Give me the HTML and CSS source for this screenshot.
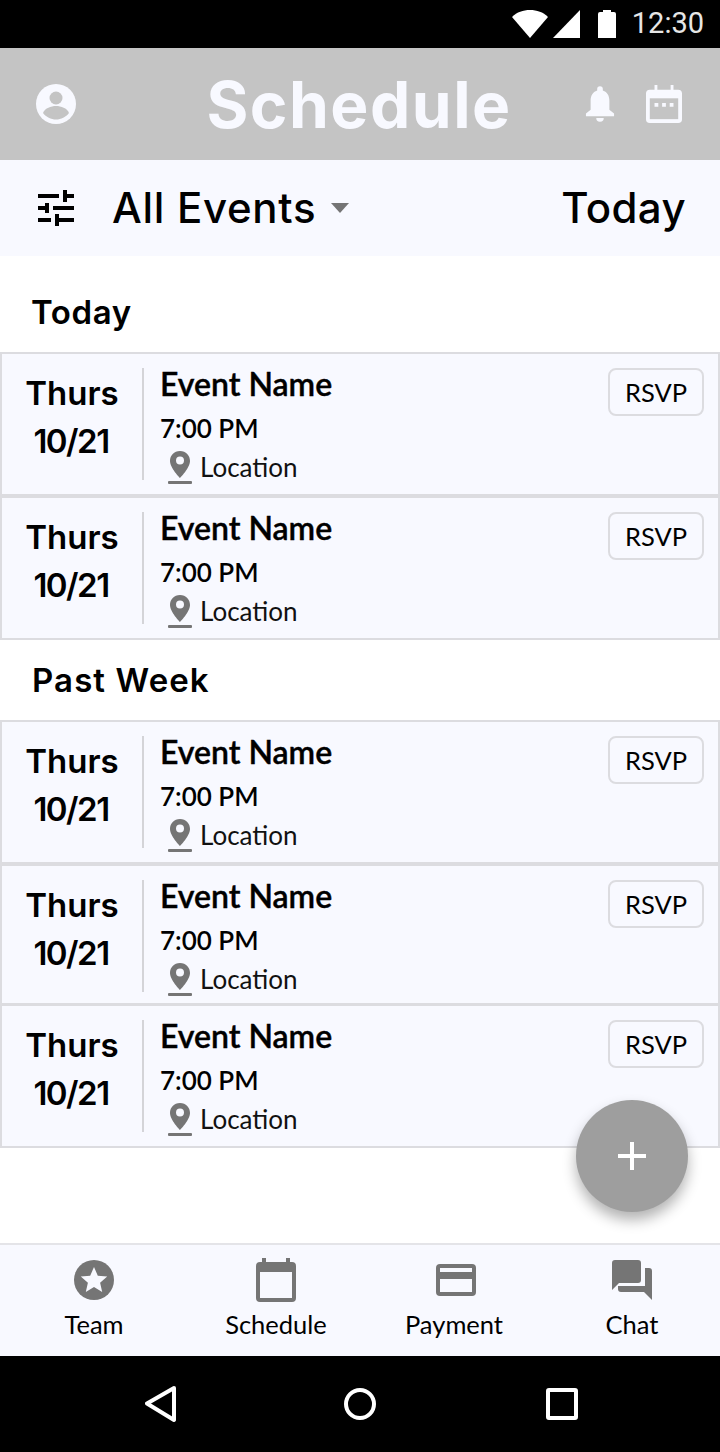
FILE: index.html
```html
<!DOCTYPE html>
<html lang="en">
<head>
  <meta charset="UTF-8" />
  <meta name="viewport" content="width=device-width, initial-scale=1.0"/>
  <title>Schedule</title>
  <link rel="stylesheet" href="styles.css">
</head>
<body>
  <div class="statusbar">
    <svg class="st-wifi" width="36" height="28" viewBox="0 0 36 28"><path d="M0 7C5 2 11 0 18 0s13 2 18 7L18 28z" fill="#fff"/></svg>
    <svg class="st-signal" width="27" height="28" viewBox="0 0 27 28"><path d="M27 0v28H0z" fill="#fff"/></svg>
    <svg class="st-batt" width="18" height="28" viewBox="0 0 18 28"><path d="M5 2V0h8v2h3a2 2 0 0 1 2 2v24H0V4a2 2 0 0 1 2-2z" fill="#fff"/></svg>
    <span class="st-time">12:30</span>
  </div>

  <header class="topbar">
    <svg class="top-user" width="40" height="40" viewBox="0 0 40 40"><circle cx="20" cy="20" r="20" fill="#f8f9ff"/><circle cx="20" cy="14" r="6.500" fill="#c4c4c4"/><path d="M7 29c2-5 8-7 13-7s11 2 13 7c-3 4-8 6.500-13 6.500S10 33 7 29z" fill="#c4c4c4"/></svg>
    <h1>Schedule</h1>
    <div class="top-actions">
      <svg width="30" height="40" viewBox="0 0 32 40"><path d="M16 1a3 3 0 0 1 3 3v1.500c5 1.500 7 6 7 11V26l5 4v3H1v-3l5-4v-9.500c0-5 2-9.500 7-11V4a3 3 0 0 1 3-3zM12 35h8a4 4 0 0 1-8 0z" fill="#f8f9ff"/></svg>
      <svg width="36" height="40" viewBox="0 0 38 40"><path d="M9 0h3v5h14V0h3v5h5a4 4 0 0 1 4 4v27a4 4 0 0 1-4 4H4a4 4 0 0 1-4-4V9a4 4 0 0 1 4-4h5z" fill="#f8f9ff"/><path d="M4 14h30v22H4z" fill="#c4c4c4"/><path d="M9 19h4v4H9zM17 19h4v4h-4zM25 19h4v4h-4z" fill="#f8f9ff"/></svg>
    </div>
  </header>

  <div class="filterbar">
    <svg class="filter-icon" width="36" height="36" viewBox="0 0 36 36"><path d="M0 4h21v4H0zM25 0h4v4h7v4h-7v4h-4zM0 16h7v-3h4v10H7v-3H0zM15 16h21v4H15zM0 28h13v4H0zM17 24h4v4h15v4H21v4h-4z" fill="#000"/></svg>
    <span class="filter-name">All Events</span>
    <span class="caret"></span>
    <span class="filter-today">Today</span>
  </div>

  <main class="content">
    <h2 class="group-title first">Today</h2>
    <div class="event">
      <div class="event-date"><span>Thurs</span><span>10/21</span></div>
      <div class="event-info">
        <div class="event-name">Event Name</div>
        <div class="event-time">7:00 PM</div>
        <div class="event-loc"><svg width="24" height="34" viewBox="0 0 24 34"><path d="M12 1C6 1 2 5.500 2 11c0 7 10 17 10 17s10-10 10-17c0-5.500-4-10-10-10zm0 13.500a4 4 0 1 1 0-8 4 4 0 0 1 0 8z" fill="#757575"/><rect y="31" width="24" height="3" rx="1" fill="#757575"/></svg>Location</div>
      </div>
      <button class="rsvp">RSVP</button>
    </div>
    <div class="event">
      <div class="event-date"><span>Thurs</span><span>10/21</span></div>
      <div class="event-info">
        <div class="event-name">Event Name</div>
        <div class="event-time">7:00 PM</div>
        <div class="event-loc"><svg width="24" height="34" viewBox="0 0 24 34"><path d="M12 1C6 1 2 5.500 2 11c0 7 10 17 10 17s10-10 10-17c0-5.500-4-10-10-10zm0 13.500a4 4 0 1 1 0-8 4 4 0 0 1 0 8z" fill="#757575"/><rect y="31" width="24" height="3" rx="1" fill="#757575"/></svg>Location</div>
      </div>
      <button class="rsvp">RSVP</button>
    </div>

    <h2 class="group-title">Past Week</h2>
    <div class="event">
      <div class="event-date"><span>Thurs</span><span>10/21</span></div>
      <div class="event-info">
        <div class="event-name">Event Name</div>
        <div class="event-time">7:00 PM</div>
        <div class="event-loc"><svg width="24" height="34" viewBox="0 0 24 34"><path d="M12 1C6 1 2 5.500 2 11c0 7 10 17 10 17s10-10 10-17c0-5.500-4-10-10-10zm0 13.500a4 4 0 1 1 0-8 4 4 0 0 1 0 8z" fill="#757575"/><rect y="31" width="24" height="3" rx="1" fill="#757575"/></svg>Location</div>
      </div>
      <button class="rsvp">RSVP</button>
    </div>
    <div class="event short">
      <div class="event-date"><span>Thurs</span><span>10/21</span></div>
      <div class="event-info">
        <div class="event-name">Event Name</div>
        <div class="event-time">7:00 PM</div>
        <div class="event-loc"><svg width="24" height="34" viewBox="0 0 24 34"><path d="M12 1C6 1 2 5.500 2 11c0 7 10 17 10 17s10-10 10-17c0-5.500-4-10-10-10zm0 13.500a4 4 0 1 1 0-8 4 4 0 0 1 0 8z" fill="#757575"/><rect y="31" width="24" height="3" rx="1" fill="#757575"/></svg>Location</div>
      </div>
      <button class="rsvp">RSVP</button>
    </div>
    <div class="event overlap">
      <div class="event-date"><span>Thurs</span><span>10/21</span></div>
      <div class="event-info">
        <div class="event-name">Event Name</div>
        <div class="event-time">7:00 PM</div>
        <div class="event-loc"><svg width="24" height="34" viewBox="0 0 24 34"><path d="M12 1C6 1 2 5.500 2 11c0 7 10 17 10 17s10-10 10-17c0-5.500-4-10-10-10zm0 13.500a4 4 0 1 1 0-8 4 4 0 0 1 0 8z" fill="#757575"/><rect y="31" width="24" height="3" rx="1" fill="#757575"/></svg>Location</div>
      </div>
      <button class="rsvp">RSVP</button>
    </div>
  </main>

  <button class="fab" aria-label="Add">
    <svg width="28" height="28" viewBox="0 0 28 28"><path d="M12 0h4v12h12v4H16v12h-4V16H0v-4h12z" fill="#fff"/></svg>
  </button>

  <nav class="tabbar">
    <div class="tab">
      <div class="tab-icon"><svg width="40" height="40" viewBox="0 0 40 40"><circle cx="20" cy="20" r="20" fill="#757575"/><path d="M20 7l3.800 8.700 9.400.9-7.100 6.200 2.100 9.200-8.200-4.900-8.200 4.900 2.100-9.200-7.100-6.200 9.400-.9z" fill="#f8f9ff"/></svg></div>
      <span>Team</span>
    </div>
    <div class="tab">
      <div class="tab-icon"><svg width="40" height="44" viewBox="0 0 40 44"><path d="M6 0h4v4h20V0h4v4h2a4 4 0 0 1 4 4v32a4 4 0 0 1-4 4H4a4 4 0 0 1-4-4V8a4 4 0 0 1 4-4h2z" fill="#757575"/><path d="M4 14h32v26H4z" fill="#f8f9ff"/></svg></div>
      <span>Schedule</span>
    </div>
    <div class="tab pay">
      <div class="tab-icon"><svg width="40" height="32" viewBox="0 0 40 32"><rect width="40" height="32" rx="4" fill="#757575"/><path d="M4 4h32v4H4zM4 15h32v13H4z" fill="#f8f9ff"/></svg></div>
      <span>Payment</span>
    </div>
    <div class="tab">
      <div class="tab-icon"><svg width="40" height="40" viewBox="0 0 40 40"><path d="M3 0h23a3 3 0 0 1 3 3v17a3 3 0 0 1-3 3H7l-7 7V3a3 3 0 0 1 3-3z" fill="#757575"/><path d="M33 8h4a3 3 0 0 1 3 3v29l-8-8H9a3 3 0 0 1-3-3v-3h27z" fill="#757575"/></svg></div>
      <span>Chat</span>
    </div>
  </nav>

  <div class="sysbar">
    <svg width="32" height="38" viewBox="0 0 32 38"><path d="M29 3L2 18.500 29 35z" fill="none" stroke="#fff" stroke-width="4" stroke-linejoin="round"/></svg>
    <svg width="32" height="32" viewBox="0 0 32 32"><circle cx="16" cy="16" r="14" fill="none" stroke="#fff" stroke-width="4"/></svg>
    <svg class="sys-square" width="32" height="32" viewBox="0 0 32 32"><rect x="2" y="2" width="28" height="28" rx="1" fill="none" stroke="#fff" stroke-width="4"/></svg>
  </div>
</body>
</html>
```

FILE: styles.css
```css
* {
  box-sizing: border-box;
}

body {
  margin: 0;
  height: 1452px;
  position: relative;
  display: flex;
  flex-direction: column;
  font-family: 'Lato', sans-serif;
  background-color: white;
  color: black;
}

h1, h2 {
  margin: 0;
}

svg {
  display: block;
  flex-shrink: 0;
}

.statusbar {
  height: 48px;
  background-color: black;
  display: flex;
  align-items: center;
  justify-content: flex-end;
  padding-right: 16px;
}

.st-wifi {
  margin-right: 5px;
}

.st-batt {
  margin-left: 18px;
}

.st-time {
  margin-left: 16px;
  margin-top: -3px;
  color: #e6e6e6;
  font-family: 'Roboto', sans-serif;
  font-size: 29px;
}

.topbar {
  height: 112px;
  background-color: #c4c4c4;
  display: grid;
  grid-template-columns: 1fr auto 1fr;
  align-items: center;
  padding: 0 38px 0 36px;
}

.topbar h1 {
  font-family: 'Inter', sans-serif;
  font-size: 64px;
  font-weight: 700;
  letter-spacing: 1.5px;
  color: #f8f9ff;
}

.top-actions {
  justify-self: end;
  display: flex;
  gap: 31px;
}

.filterbar {
  height: 96px;
  background-color: #f8f9ff;
  display: flex;
  align-items: center;
  padding: 0 34px 0 38px;
}

.filter-name, .filter-today {
  font-family: 'Inter', sans-serif;
  font-size: 42px;
  font-weight: 500;
  padding-bottom: 2px;
}

.filter-name {
  margin-left: 38px;
  letter-spacing: 0.7px;
}

.filter-today {
  margin-left: auto;
  letter-spacing: 0.4px;
}

.caret {
  margin-left: 15px;
  border-left: 9px solid transparent;
  border-right: 9px solid transparent;
  border-top: 10px solid #757575;
}

.content {
  flex: 1;
}

.group-title {
  height: 80px;
  display: flex;
  align-items: center;
  padding-left: 32px;
  font-family: 'Inter', sans-serif;
  font-size: 33px;
  font-weight: 600;
  letter-spacing: 1.1px;
}

.group-title.first {
  height: 96px;
  padding-top: 16px;
  padding-left: 31px;
  letter-spacing: 0.6px;
}

.event {
  height: 144px;
  background-color: #f8f9ff;
  border: 2px solid #dcdce0;
  display: flex;
  padding-top: 14px;
}

.event.short {
  height: 141px;
}

.event.overlap {
  margin-top: -1px;
}

.event-date {
  width: 142px;
  height: 112px;
  border-right: 2px solid #d4d4d8;
  display: flex;
  flex-direction: column;
  align-items: center;
  font-family: 'Inter', sans-serif;
  font-size: 33px;
  font-weight: 600;
  line-height: 48px;
  padding-top: 1px;
}

.event-date span:last-child {
  letter-spacing: -1.5px;
  margin-right: 2px;
}

.event-info {
  flex: 1;
  padding-left: 16px;
}

.event-name {
  font-size: 32px;
  font-weight: 600;
  line-height: 36px;
  margin-top: -2px;
  -webkit-text-stroke: 0.4px black;
}

.event-time {
  font-size: 26px;
  font-weight: 600;
  line-height: 32px;
  margin-top: 10px;
}

.event-loc {
  display: flex;
  align-items: center;
  gap: 8px;
  font-size: 26px;
  line-height: 34px;
  margin-top: 6px;
  padding-left: 8px;
  color: #111;
}

.rsvp {
  width: 96px;
  height: 48px;
  margin-right: 14px;
  background-color: #f8f9ff;
  border: 2px solid #dcdce0;
  border-radius: 8px;
  font-family: 'Lato', sans-serif;
  font-size: 25.500px;
  color: black;
  padding: 0;
}

.fab {
  position: absolute;
  left: 576px;
  top: 1100px;
  width: 112px;
  height: 112px;
  border-radius: 50%;
  border: 0;
  background-color: #9e9e9e;
  box-shadow: 0 8px 14px rgba(0, 0, 0, 0.3);
  display: flex;
  align-items: center;
  justify-content: center;
}

.tabbar {
  height: 113px;
  background-color: #f8f9ff;
  border-top: 2px solid #e4e4e8;
  padding-top: 13px;
  display: grid;
  grid-template-columns: 188px 176px 180px 176px;
}

.tab {
  display: flex;
  flex-direction: column;
  align-items: center;
  font-size: 25.500px;
  line-height: 32px;
}

.tab-icon {
  height: 44px;
  margin-bottom: 6px;
  display: flex;
  align-items: center;
}

.tab.pay .tab-icon {
  margin-left: 4px;
}

.sysbar {
  height: 96px;
  background-color: black;
  display: flex;
  align-items: center;
  padding-left: 145px;
  gap: 167px;
}

.sys-square {
  margin-left: 3px;
}
```
